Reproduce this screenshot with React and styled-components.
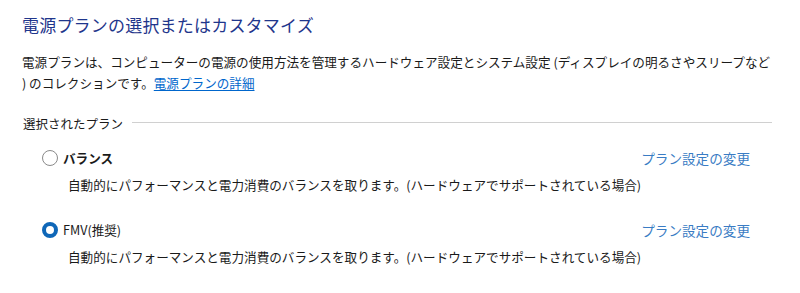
import React from "react";
import styled, { createGlobalStyle } from "styled-components";

const Global = createGlobalStyle`
  html, body { margin: 0; padding: 0; background: #ffffff; }
  body { font-family: "Noto Sans CJK JP", "Noto Sans", sans-serif; color: #1a1a1a; }
`;

const Page = styled.div`
  width: 800px;
  height: 293px;
  box-sizing: border-box;
  padding: 13px 28px 0 22px;
  overflow: hidden;
`;

const Title = styled.h1`
  margin: 0;
  font-size: 17px;
  line-height: 24px;
  font-weight: 400;
  color: #1f368c;
  letter-spacing: 0.2px;
`;

const Description = styled.p`
  margin: 14px 0 0;
  font-size: 12.6px;
  line-height: 21px;
  white-space: nowrap;
`;

const Link = styled.a`
  color: ${(p) => p.$color || "#0066cc"};
  text-decoration: ${(p) => (p.$underline ? "underline" : "none")};
  text-underline-offset: 2px;
  cursor: pointer;
`;

const GroupHeader = styled.div`
  margin: 21px 0 0 1px;
  display: flex;
  align-items: center;
  gap: 9px;
  font-size: 12.5px;
  line-height: 20px;
`;

const Rule = styled.div`
  flex: 1;
  height: 1px;
  background: #d0d0d0;
  margin-top: -3px;
`;

const Plan = styled.div`
  margin: ${(p) => p.$top}px 0 0 20px;
`;

const PlanRow = styled.div`
  display: flex;
  align-items: center;
  font-size: 12.6px;
  line-height: 20px;
`;

const Radio = styled.span`
  box-sizing: border-box;
  width: 16px;
  height: 16px;
  border-radius: 50%;
  flex: none;
  margin-right: 5px;
  background: #ffffff;
  border: ${(p) => (p.$checked ? "4px solid #0f67b8" : "1px solid #8a8a8a")};
`;

const PlanName = styled.span`
  font-weight: ${(p) => (p.$bold ? 700 : 400)};
  flex: 1;
`;

const PlanLink = styled(Link)`
  margin-right: 22px;
  font-size: 13.6px;
`;

const PlanDesc = styled.div`
  margin: ${(p) => p.$top}px 0 0 26px;
  font-size: 12.6px;
  line-height: 20px;
`;

const plans = [
  { name: "バランス", bold: true, checked: false, top: 14 },
  { name: "FMV(推奨)", bold: false, checked: true, top: 25 },
];

export default function App() {
  return (
    <>
      <Global />
      <Page>
        <Title>電源プランの選択またはカスタマイズ</Title>
        <Description>
          電源プランは、コンピューターの電源の使用方法を管理するハードウェア設定とシステム設定 (ディスプレイの明るさやスリープなど
          <br />) のコレクションです。<Link $underline>電源プランの詳細</Link>
        </Description>
        <GroupHeader>
          <span>選択されたプラン</span>
          <Rule />
        </GroupHeader>
        {plans.map((p) => (
          <Plan key={p.name} $top={p.top}>
            <PlanRow>
              <Radio $checked={p.checked} />
              <PlanName $bold={p.bold}>{p.name}</PlanName>
              <PlanLink $color="#3a7cc4">プラン設定の変更</PlanLink>
            </PlanRow>
            <PlanDesc $top={7}>
              自動的にパフォーマンスと電力消費のバランスを取ります。(ハードウェアでサポートされている場合)
            </PlanDesc>
          </Plan>
        ))}
      </Page>
    </>
  );
}
